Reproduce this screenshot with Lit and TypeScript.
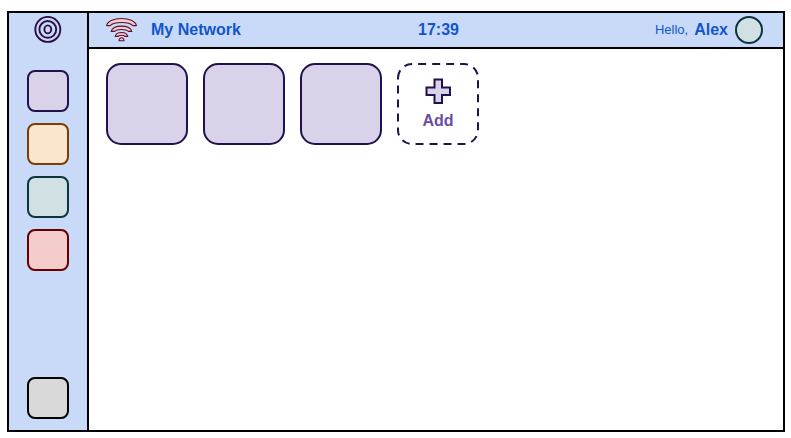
import { LitElement, html, css } from "lit";
import { customElement, property, state } from "lit/decorators.js";
import { classMap } from "lit/directives/class-map.js";

type Tone = "violet" | "orange" | "teal" | "red" | "grey";

@customElement("nav-rail")
export class NavRail extends LitElement {
  @property({ attribute: false }) tones: Tone[] = [];

  static styles = css`
    :host {
      display: flex;
      flex-direction: column;
      align-items: center;
      gap: 11px;
      width: 78px;
      padding: 3px 0 11px;
      background: #c9daf8;
      border-right: 2px solid #000;
    }
    .logo {
      display: block;
      width: 28px;
      height: 28px;
      margin-bottom: 15px;
    }
    .tile {
      box-sizing: border-box;
      width: 42px;
      height: 42px;
      padding: 0;
      border: 2px solid;
      border-radius: 8px;
    }
    .violet { background: #d9d2e9; border-color: #20124d; }
    .orange { background: #fce5cd; border-color: #783f04; }
    .teal { background: #d0e0e3; border-color: #0c343d; }
    .red { background: #f4cccc; border-color: #660000; }
    .grey { background: #d9d9d9; border-color: #000; margin-top: auto; }
  `;

  private tile(tone: Tone) {
    return html`<button class=${classMap({ tile: true, [tone]: true })} aria-label="${tone} section"></button>`;
  }

  render() {
    return html`
      <svg class="logo" viewBox="0 0 28 28" fill="#d9d2e9" stroke="#20124d" stroke-width="1.9" aria-hidden="true">
        <circle cx="13.8" cy="13.4" r="12.5" />
        <circle cx="13.8" cy="13.4" r="8.4" fill="#c9daf8" />
        <ellipse cx="13.8" cy="13.4" rx="3.4" ry="4" />
      </svg>
      ${this.tones.map((t) => this.tile(t))}
      ${this.tile("grey")}
    `;
  }
}

@customElement("status-bar")
export class StatusBar extends LitElement {
  @property() network = "";
  @property() time = "";
  @property() user = "";

  static styles = css`
    :host {
      display: grid;
      grid-template-columns: 1fr auto 1fr;
      align-items: center;
      height: 34px;
      padding: 0 20px 0 17px;
      background: #c9daf8;
      border-bottom: 2px solid #000;
      color: #1155cc;
      font-size: 16px;
      line-height: 20px;
      font-weight: bold;
    }
    .network, .user {
      display: flex;
      align-items: center;
    }
    .network { gap: 13px; }
    .time { padding-left: 8px; }
    .user { justify-content: flex-end; }
    .hello {
      margin-right: 6px;
      font-size: 13px;
      font-weight: normal;
    }
    .wifi {
      width: 32px;
      height: 24px;
    }
    .avatar {
      box-sizing: border-box;
      width: 28px;
      height: 28px;
      margin-left: 7px;
      padding: 0;
      border: 2px solid #0c343d;
      border-radius: 50%;
      background: #d0e0e3;
    }
  `;

  render() {
    return html`
      <div class="network">
        <svg class="wifi" viewBox="0 0 32 24" fill="#f4cccc" stroke="#5b0f2c" stroke-width="1.1" stroke-linejoin="round" aria-hidden="true">
          <path d="M0.6 7.6 C2.5 -1.8 28.5 -1.8 30.4 7.6 H26.8 C23 3.4 8 3.4 4.2 7.6 Z" />
          <path d="M5.2 13.4 C7 6.4 24 6.4 25.8 13.4 H22.4 C20 10.8 11 10.8 8.6 13.4 Z" />
          <path d="M9.2 18.4 C10.6 13.2 20.4 13.2 21.8 18.4 H18.8 C17.4 16.8 13.6 16.8 12.2 18.4 Z" />
          <path d="M13 22.8 C12.8 18.8 18.2 18.8 18 22.8 Z" />
        </svg>
        <span>${this.network}</span>
      </div>
      <time class="time">${this.time}</time>
      <div class="user">
        <span class="hello">Hello,</span>
        <span>${this.user}</span>
        <button class="avatar" aria-label="Account"></button>
      </div>
    `;
  }
}

@customElement("app-root")
export class AppRoot extends LitElement {
  @state() private cards = ["First", "Second", "Third"];

  static styles = css`
    :host {
      display: block;
      box-sizing: border-box;
      min-height: 100vh;
      padding: 11px 6px 6px 7px;
      background: #fff;
      font-family: "Liberation Sans", Arial, sans-serif;
    }
    .frame {
      box-sizing: border-box;
      display: flex;
      min-height: calc(100vh - 17px);
      border: 2px solid #000;
    }
    .main {
      flex: 1;
      min-width: 0;
    }
    .cards {
      display: flex;
      flex-wrap: wrap;
      gap: 15px;
      padding: 14px 17px;
    }
    .card, .add {
      box-sizing: border-box;
      width: 82px;
      height: 82px;
      padding: 0;
    }
    .card {
      background: #d9d2e9;
      border: 2px solid #20124d;
      border-radius: 15px;
    }
    .add {
      display: grid;
      background: none;
      border: 0;
      color: #674ea7;
      font: bold 16px/20px "Liberation Sans", Arial, sans-serif;
    }
    .outline, .face { grid-area: 1 / 1; }
    .outline {
      width: 82px;
      height: 82px;
    }
    .face {
      display: flex;
      flex-direction: column;
      align-items: center;
      gap: 6px;
      padding-top: 15px;
    }
    .plus {
      width: 28px;
      height: 27px;
    }
  `;

  render() {
    return html`
      <div class="frame">
        <nav-rail .tones=${["violet", "orange", "teal", "red"]}></nav-rail>
        <div class="main">
          <status-bar network="My Network" time="17:39" user="Alex"></status-bar>
          <main class="cards">
            ${this.cards.map((name) => html`<button class="card" aria-label="${name} card"></button>`)}
            <button class="add">
              <svg class="outline" viewBox="0 0 82 82" fill="none" stroke="#20124d" stroke-width="2" stroke-dasharray="8 6" aria-hidden="true">
                <path d="M1 15 A14 14 0 0 1 15 1 H67 A14 14 0 0 1 81 15 V67 A14 14 0 0 1 67 81 H15 A14 14 0 0 1 1 67 Z" />
              </svg>
              <span class="face">
                <svg class="plus" viewBox="0 0 28 27" fill="#d9d2e9" stroke="#20124d" stroke-width="2" aria-hidden="true">
                  <path d="M2.5 9.5 H10.5 V1.5 H18 V9.5 H26 V17 H18 V25 H10.5 V17 H2.5 Z" />
                </svg>
                <span>Add</span>
              </span>
            </button>
          </main>
        </div>
      </div>
    `;
  }
}
